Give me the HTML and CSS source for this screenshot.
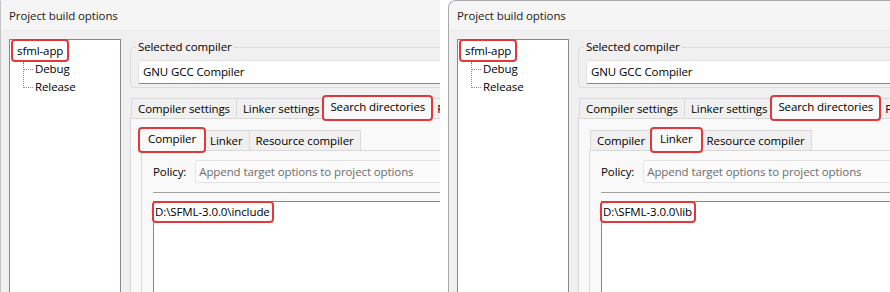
FILE: index.html
```html
<!DOCTYPE html>
<html lang="en">

<head>
    <meta charset="UTF-8">
    <title>Project build options</title>
    <link rel="stylesheet" href="styles.css">
</head>

<body>
    <!-- compiler search directories -->
    <div class="dialog">
        <div class="titlebar">Project build options</div>
        <div class="dialog-body">
            <div class="tree">
                <div class="tree-root"><span class="mark">sfml-app</span></div>
                <ul class="tree-children">
                    <li>Debug</li>
                    <li>Release</li>
                </ul>
            </div>
            <div class="options">
                <fieldset class="group">
                    <legend>Selected compiler</legend>
                    <div class="textbox">GNU GCC Compiler</div>
                </fieldset>
                <div class="tabs">
                    <span class="tab">Compiler settings</span>
                    <span class="tab">Linker settings</span>
                    <span class="tab active mark">Search directories</span>
                    <span class="tab">Pre/post build steps</span>
                </div>
                <div class="tab-page">
                    <div class="tabs">
                        <span class="tab active mark">Compiler</span>
                        <span class="tab">Linker</span>
                        <span class="tab">Resource compiler</span>
                    </div>
                    <div class="inner-page">
                        <div class="policy-row">
                            <span>Policy:</span>
                            <div class="combo">Append target options to project options</div>
                        </div>
                        <div class="separator"></div>
                        <div class="listbox">
                            <span class="mark">D:\SFML-3.0.0\include</span>
                        </div>
                    </div>
                </div>
            </div>
        </div>
    </div>

    <!-- linker search directories -->
    <div class="dialog">
        <div class="titlebar">Project build options</div>
        <div class="dialog-body">
            <div class="tree">
                <div class="tree-root"><span class="mark">sfml-app</span></div>
                <ul class="tree-children">
                    <li>Debug</li>
                    <li>Release</li>
                </ul>
            </div>
            <div class="options">
                <fieldset class="group">
                    <legend>Selected compiler</legend>
                    <div class="textbox">GNU GCC Compiler</div>
                </fieldset>
                <div class="tabs">
                    <span class="tab">Compiler settings</span>
                    <span class="tab">Linker settings</span>
                    <span class="tab active mark">Search directories</span>
                    <span class="tab">Pre/post build steps</span>
                </div>
                <div class="tab-page">
                    <div class="tabs">
                        <span class="tab">Compiler</span>
                        <span class="tab active mark">Linker</span>
                        <span class="tab">Resource compiler</span>
                    </div>
                    <div class="inner-page">
                        <div class="policy-row">
                            <span>Policy:</span>
                            <div class="combo">Append target options to project options</div>
                        </div>
                        <div class="separator"></div>
                        <div class="listbox">
                            <span class="mark">D:\SFML-3.0.0\lib</span>
                        </div>
                    </div>
                </div>
            </div>
        </div>
    </div>
</body>

</html>
```

FILE: styles.css
```css
* {
    margin: 0;
    padding: 0;
    box-sizing: border-box;
}

body {
    background-color: #fff;
    display: flex;
    height: 292px;
    overflow: hidden;
    font-family: 'Open Sans', 'Noto Sans', sans-serif;
    font-size: 11.5px;
    letter-spacing: -0.1px;
    color: #000;
}

.dialog {
    flex-shrink: 0;
    width: 440px;
    height: 292px;
    overflow: hidden;
    background-color: #f0f0f0;
    border-left: 1px solid #c4c4c4;
    border-top: 1px solid #f5f5f5;
}

.dialog + .dialog {
    width: 442px;
    margin-left: 8px;
    border-left-color: #a9a9a9;
    border-top-color: #a9a9a9;
    border-top-left-radius: 8px;
}

.titlebar {
    height: 30px;
    line-height: 30px;
    padding-left: 8px;
    background-color: #f5f5f5;
    border-bottom: 1px solid #ebebeb;
    color: #1a1a1a;
}

.dialog-body {
    display: flex;
    align-items: flex-start;
    padding: 8px 0 0 8px;
}

/* red annotation boxes */
.mark {
    border: 2px solid #e3383b;
    border-radius: 4px;
}

.tree {
    flex-shrink: 0;
    width: 112px;
    height: 270px;
    background-color: #fff;
    border: 1px solid #828790;
}

.tree-root {
    display: flex;
}

.tree-root .mark {
    height: 23px;
    line-height: 19px;
    padding: 0 4px;
    margin: -1px 0 0 1px;
}

.tree-children {
    position: relative;
    list-style: none;
    margin: -2px 0 0 13px;
}

.tree-children::before {
    content: '';
    position: absolute;
    left: 0;
    top: 2px;
    height: 26px;
    border-left: 1px dotted #8c8c8c;
}

.tree-children li {
    position: relative;
    height: 18px;
    line-height: 18px;
    padding-left: 12px;
}

.tree-children li::before {
    content: '';
    position: absolute;
    left: 0;
    top: 9px;
    width: 10px;
    border-top: 1px dotted #8c8c8c;
}

.options {
    flex-shrink: 0;
    width: 420px;
    margin-left: 9px;
}

.group {
    border: 1px solid #dcdcdc;
    border-radius: 3px;
    padding: 0 7px 3px 7px;
}

.group legend {
    line-height: 16px;
    padding: 0 2px;
    margin-left: -2px;
}

.textbox {
    height: 24px;
    line-height: 22px;
    margin-top: 5px;
    padding-left: 4px;
    background-color: #fff;
    border: 1px solid #e1e1e1;
    border-bottom-color: #868686;
    border-radius: 2px;
}

.tabs {
    display: flex;
    align-items: flex-end;
    margin-left: -1px;
    white-space: nowrap;
}

.options > .tabs {
    margin-top: 7px;
}

.tab {
    height: 20px;
    line-height: 19px;
    padding: 0 6px;
    margin-left: -1px;
    background-color: #f0f0f0;
    border: 1px solid #d9d9d9;
    border-bottom: none;
}

.tab:first-child {
    margin-left: 2px;
}

.tab.active {
    position: relative;
    z-index: 1;
    height: 26px;
    line-height: 20px;
    padding: 0 8px;
    margin: 0 -1px -3px -2px;
    background-color: #f9f9f9;
    border: 2px solid #e3383b;
}

.options > .tabs .tab.active {
    padding: 0 6px;
    margin-left: -4px;
}

.tab.active:first-child {
    margin-left: -2px;
}

.tab.active + .tab {
    margin-left: 0;
    padding-left: 4px;
}

.tab-page {
    height: 200px;
    padding: 8px 0 0 10px;
    background-color: #f9f9f9;
    border: 1px solid #d9d9d9;
}

.inner-page {
    height: 180px;
    padding: 9px 0 0 11px;
    background-color: #f9f9f9;
    border: 1px solid #d9d9d9;
}

.policy-row {
    display: flex;
    align-items: center;
    gap: 9px;
}

.combo {
    flex: 1;
    height: 23px;
    line-height: 21px;
    padding-left: 3px;
    color: #6d6d6d;
    background-color: #fbfbfb;
    border: 1px solid #e3e3e3;
    border-radius: 2px;
    white-space: nowrap;
}

.separator {
    margin-top: 9px;
    border-top: 1px solid #a0a0a0;
}

.listbox {
    height: 120px;
    margin-top: 8px;
    background-color: #fff;
    border: 1px solid #828790;
}

.listbox .mark {
    display: inline-block;
    line-height: 18px;
    padding: 0 2px 0 1px;
    margin: -1px 0 0 -2px;
}
```
